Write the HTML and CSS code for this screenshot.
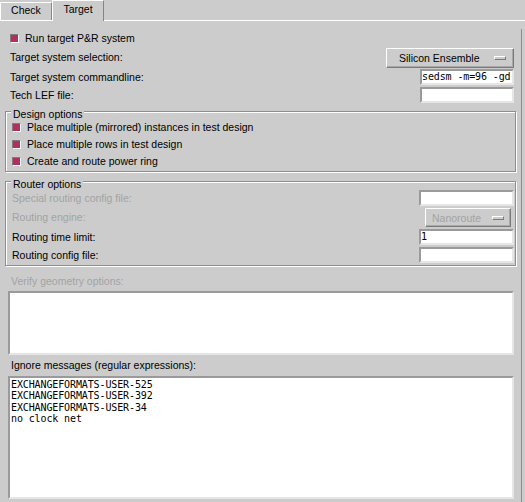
FILE: index.html
```
<!DOCTYPE html>
<html>
<head>
<meta charset="utf-8">
<link rel="stylesheet" href="styles.css">
</head>
<body>
<div class="window">
  <div class="tabbar">
    <div class="tab tab-check">Check</div>
    <div class="tab tab-active">Target</div>
  </div>
  <div class="pane">
    <div class="row row-check">
      <span class="cb"></span><span>Run target P&amp;R system</span>
    </div>
    <div class="row row-btn">
      <span>Target system selection:</span>
      <div class="menubtn menubtn-silicon"><span>Silicon Ensemble</span><span class="ind"></span></div>
    </div>
    <div class="row row-entry">
      <span>Target system commandline:</span>
      <div class="entry entry-top mono">sedsm -m=96 -gd</div>
    </div>
    <div class="row row-entry">
      <span>Tech LEF file:</span>
      <div class="entry entry-top"></div>
    </div>

    <div class="group group-design">
      <div class="group-title">Design options</div>
      <div class="crow"><span class="cb"></span><span>Place multiple (mirrored) instances in test design</span></div>
      <div class="crow"><span class="cb"></span><span>Place multiple rows in test design</span></div>
      <div class="crow"><span class="cb"></span><span>Create and route power ring</span></div>
    </div>

    <div class="group group-router">
      <div class="group-title">Router options</div>
      <div class="grow grow-entry">
        <span class="disabled">Special routing config file:</span>
        <div class="entry entry-router"></div>
      </div>
      <div class="grow grow-btn">
        <span class="disabled">Routing engine:</span>
        <div class="menubtn menubtn-nano disabled"><span>Nanoroute</span><span class="ind"></span></div>
      </div>
      <div class="grow grow-entry">
        <span>Routing time limit:</span>
        <div class="entry entry-router mono">1</div>
      </div>
      <div class="grow grow-entry">
        <span>Routing config file:</span>
        <div class="entry entry-router"></div>
      </div>
    </div>

    <div class="tlabel tlabel-verify disabled">Verify geometry options:</div>
    <div class="textbox textbox-verify"></div>
    <div class="tlabel tlabel-ignore">Ignore messages (regular expressions):</div>
    <div class="textbox textbox-ignore mono">EXCHANGEFORMATS-USER-525
EXCHANGEFORMATS-USER-392
EXCHANGEFORMATS-USER-34
no clock net</div>
  </div>
</div>
</body>
</html>
```
FILE: styles.css
```
html, body {
  margin: 0;
  padding: 0;
}
body {
  width: 525px;
  height: 502px;
  overflow: hidden;
  background: #cccccc;
  font-family: "Liberation Sans", Arial, sans-serif;
  font-size: 10.5px;
  line-height: 13px;
  color: #000;
}
.mono {
  font-family: "DejaVu Sans Mono", monospace;
  font-size: 10px;
  letter-spacing: -0.12px;
}
.disabled {
  color: #a3a3a3;
}

/* tabs */
.tabbar {
  display: flex;
  height: 21px;
  box-shadow: inset 0 -1px 0 #ffffff;
}
.tab {
  box-sizing: border-box;
  width: 52px;
  text-align: center;
  line-height: 12px;
  border-top: 1px solid #ffffff;
  border-left: 1px solid #ffffff;
  border-right: 1px solid #858585;
  background: #cccccc;
}
.tab-check {
  margin-top: 2px;
  height: 18px;
  padding-top: 1px;
}
.tab-active {
  height: 21px;
  padding-top: 2px;
}

/* pane */
.pane {
  box-sizing: border-box;
  width: 522px;
  height: 481px;
  padding: 0 5px;
  border-right: 1px solid #8c8c8c;
}
.row {
  display: flex;
  align-items: center;
  justify-content: space-between;
  padding: 0 2px 0 5px;
}
.row-check {
  margin-top: 8px;
  height: 18px;
  justify-content: flex-start;
  gap: 6px;
}
.row-btn {
  height: 21px;
}
.row-entry {
  height: 18px;
}

/* checkbox */
.cb {
  box-sizing: border-box;
  width: 9px;
  height: 9px;
  flex: none;
  background: #b03060;
  border: 1px solid;
  border-color: #7d7d7d #ffffff #ffffff #7d7d7d;
}

/* menubutton */
.menubtn {
  box-sizing: border-box;
  display: flex;
  align-items: center;
  border: 1px solid;
  border-color: #ffffff #7a7a7a #7a7a7a #ffffff;
  box-shadow: inset -1px -1px 0 #a8a8a8;
  background: #cccccc;
  line-height: 12px;
}
.menubtn-silicon {
  width: 128px;
  height: 20px;
  padding: 0 7px 0 12px;
}
.menubtn-nano {
  width: 86px;
  height: 19px;
  padding: 0 6px 0 6px;
  margin-right: 3px;
}
.ind {
  box-sizing: border-box;
  margin-left: auto;
  width: 12px;
  height: 4px;
  border: 1px solid;
  border-color: #ffffff #7a7a7a #7a7a7a #ffffff;
}

/* entries */
.entry {
  box-sizing: border-box;
  height: 16px;
  background: #ffffff;
  border: 2px solid;
  border-color: #9a9a9a #e6e6e6 #e6e6e6 #9a9a9a;
  white-space: nowrap;
  overflow: hidden;
  line-height: 12px;
}
.entry-top {
  width: 94px;
}
.entry-router {
  width: 95px;
}

/* groups */
.group {
  border: 1px solid #8e8e8e;
  box-shadow: inset 1px 1px 0 #ffffff, 1px 1px 0 #ffffff;
  padding: 0 1px 1px 0;
}
.group-title {
  width: fit-content;
  margin: -4px 0 -2px 5px;
  padding: 0 2px;
  background: #cccccc;
  line-height: 13px;
}
.group-design {
  margin-top: 7px;
}
.group-router {
  margin-top: 9px;
}
.crow {
  display: flex;
  align-items: center;
  gap: 6px;
  height: 17px;
  padding-left: 6px;
}
.grow {
  display: flex;
  align-items: center;
  justify-content: space-between;
  padding-left: 6px;
}
.grow-entry {
  height: 18px;
}
.grow-btn {
  height: 21px;
}

/* text areas */
.tlabel {
  display: flex;
  align-items: center;
  padding-left: 6px;
}
.tlabel-verify {
  margin-top: 6px;
  height: 19px;
}
.tlabel-ignore {
  height: 21px;
}
.textbox {
  box-sizing: border-box;
  margin: 0 2px 0 3px;
  background: #ffffff;
  border: 2px solid;
  border-color: #9a9a9a #e6e6e6 #e6e6e6 #9a9a9a;
}
.textbox-verify {
  height: 64px;
}
.textbox-ignore {
  height: 123px;
  padding: 1px 0 0 1px;
  line-height: 11.3px;
  white-space: pre;
}
```
